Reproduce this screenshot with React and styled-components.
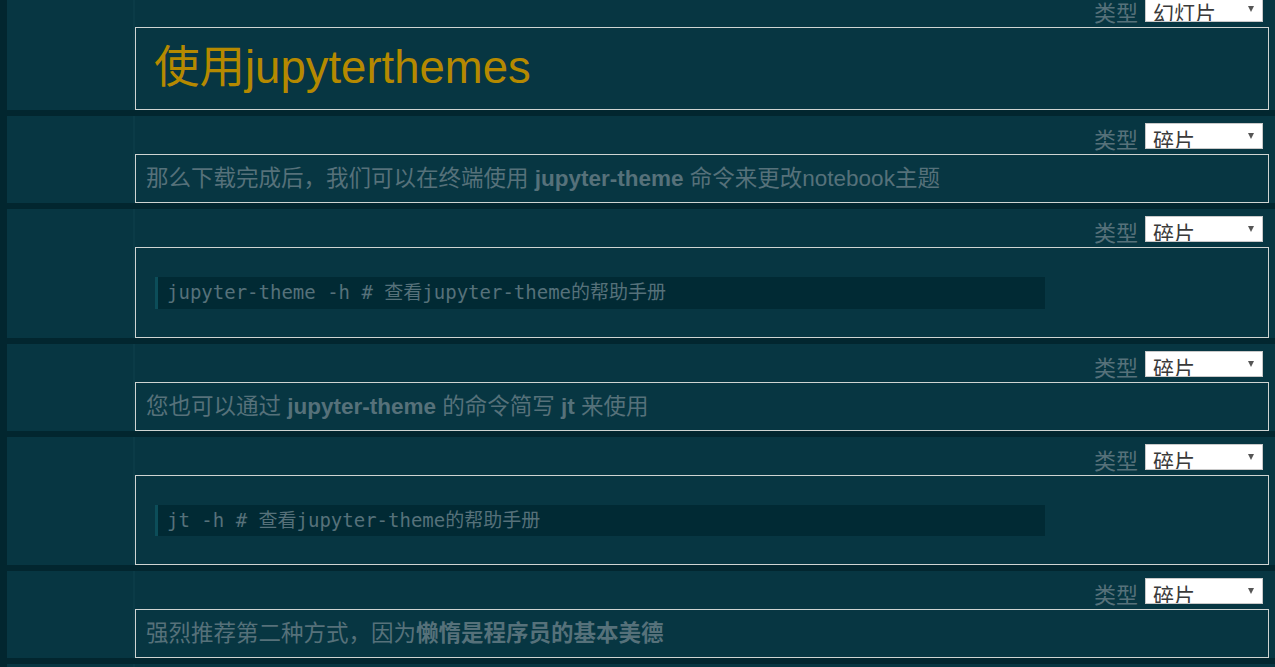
import styled, { createGlobalStyle } from 'styled-components'

const GlobalStyle = createGlobalStyle`
body {
  margin: 0;
  background: #02262f;
  overflow: hidden;
  font-family: "Liberation Sans", "Noto Sans CJK SC", sans-serif;
}
`

const Notebook = styled.div`
display: flex;
flex-direction: column;
gap: 6px;
padding-left: 7px;
margin-top: -11px;
`

const Cell = styled.div`
display: flex;
background: #073642;
`

const Prompt = styled.div`
width: 126px;
flex-shrink: 0;
border-right: 2px solid #0b3b47;
`

const Body = styled.div`
flex: 1;
display: flex;
flex-direction: column;
padding: 6px 6px 0 0;
`

const Toolbar = styled.div`
display: flex;
justify-content: flex-end;
align-items: flex-end;
gap: 7px;
height: 27px;
margin-bottom: 5px;
padding-right: 6px;
`

const Label = styled.span`
font-size: 22px;
line-height: 22px;
color: #56717a;
margin-bottom: -3px;
`

const Select = styled.div`
position: relative;
width: 118px;
height: 26px;
box-sizing: border-box;
background: #fff;
border: 1px solid #c9c9c9;
overflow: hidden;
`

const SelectText = styled.span`
display: block;
padding: 5px 0 0 7px;
font-size: 21px;
line-height: 24px;
color: #3a3a3a;
`

const Arrow = styled.span`
position: absolute;
right: 8px;
top: 9px;
width: 0;
height: 0;
border-left: 3.5px solid transparent;
border-right: 3.5px solid transparent;
border-top: 6px solid #555;
`

const Box = styled.div`
border: 1px solid #cfd4d2;
padding: ${p => p.$pad};
`

const Heading = styled.h1`
margin: 0;
font-weight: 400;
font-size: 45.5px;
line-height: 48px;
color: #b58900;
`

const Para = styled.p`
margin: 0;
font-size: 22.5px;
line-height: 33px;
color: #56717a;
b {
  font-weight: 700;
}
`

const Code = styled.pre`
margin: 0 0 0 19px;
width: 890px;
box-sizing: border-box;
background: #012a34;
border-left: 3px solid #0c4d59;
padding: 4px 9px;
font-family: "DejaVu Sans Mono", "Noto Sans CJK SC", monospace;
font-size: 19px;
line-height: 23.5px;
color: #56717a;
`

const cells = [
  { type: '幻灯片', kind: 'heading', content: '使用jupyterthemes' },
  {
    type: '碎片',
    kind: 'md',
    content: <>那么下载完成后，我们可以在终端使用 <b>jupyter-theme</b> 命令来更改notebook主题</>,
  },
  { type: '碎片', kind: 'code', content: 'jupyter-theme -h # 查看jupyter-theme的帮助手册' },
  {
    type: '碎片',
    kind: 'md',
    content: <>您也可以通过 <b>jupyter-theme</b> 的命令简写 <b>jt</b> 来使用</>,
  },
  { type: '碎片', kind: 'code', content: 'jt -h # 查看jupyter-theme的帮助手册' },
  {
    type: '碎片',
    kind: 'md',
    content: <>强烈推荐第二种方式，因为<b>懒惰是程序员的基本美德</b></>,
  },
  { type: '碎片', kind: 'md', content: '' },
]

const pads = {
  heading: '16px 18px 17px',
  md: '7px 10px',
  code: '29px 0 28px',
}

const renderContent = (cell) => {
  if (cell.kind === 'heading') return <Heading>{cell.content}</Heading>
  if (cell.kind === 'code') return <Code>{cell.content}</Code>
  return <Para>{cell.content}</Para>
}

const App = () => {
  return (
    <>
      <GlobalStyle />
      <Notebook>
        {cells.map((cell, i) => (
          <Cell key={i}>
            <Prompt />
            <Body>
              <Toolbar>
                <Label>类型</Label>
                <Select>
                  <SelectText>{cell.type}</SelectText>
                  <Arrow />
                </Select>
              </Toolbar>
              <Box $pad={pads[cell.kind]}>{renderContent(cell)}</Box>
            </Body>
          </Cell>
        ))}
      </Notebook>
    </>
  )
}

export default App
